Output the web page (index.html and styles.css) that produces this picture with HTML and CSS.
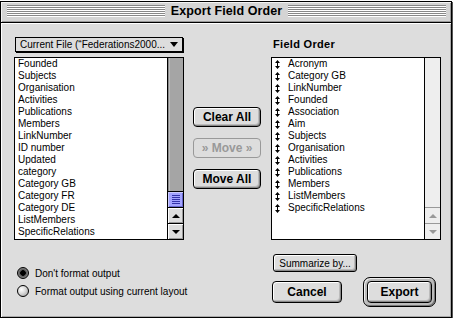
FILE: index.html
```html
<!DOCTYPE html>
<html lang="en">
<head>
  <meta charset="UTF-8">
  <title>Export Field Order</title>
  <link rel="stylesheet" href="styles.css">
</head>
<body>
  <div class="window">
    <!-- Barre de titre -->
    <div class="titlebar">
      <span class="stripes"></span>
      <span class="title">Export Field Order</span>
      <span class="stripes"></span>
    </div>

    <div class="content">
      <div class="top">
        <!-- Champs disponibles -->
        <div class="col">
          <div class="popup">
            <span class="popup-text">Current File (“Federations2000...</span>
            <span class="popup-arrow"></span>
          </div>
          <div class="list">
            <ul class="items">
              <li>Founded</li>
              <li>Subjects</li>
              <li>Organisation</li>
              <li>Activities</li>
              <li>Publications</li>
              <li>Members</li>
              <li>LinkNumber</li>
              <li>ID number</li>
              <li>Updated</li>
              <li>category</li>
              <li>Category GB</li>
              <li>Category FR</li>
              <li>Category DE</li>
              <li>ListMembers</li>
              <li>SpecificRelations</li>
            </ul>
            <div class="scrollbar active">
              <div class="track"><div class="thumb"><span class="grip-lines"></span></div></div>
              <div class="arrow"><span class="tri-up"></span></div>
              <div class="arrow"><span class="tri-down"></span></div>
            </div>
          </div>
        </div>

        <!-- Boutons centraux -->
        <div class="actions">
          <button class="btn">Clear All</button>
          <button class="btn disabled">» Move »</button>
          <button class="btn">Move All</button>
        </div>

        <!-- Ordre des champs -->
        <div class="col right">
          <div class="label">Field Order</div>
          <div class="list">
            <ul class="items order">
              <li><svg class="mover" width="5" height="9" viewBox="0 0 5 9"><path d="M0 3h5L2.5 0zM0 6h5L2.5 9zM2 3h1v3H2z"/></svg>Acronym</li>
              <li><svg class="mover" width="5" height="9" viewBox="0 0 5 9"><path d="M0 3h5L2.5 0zM0 6h5L2.5 9zM2 3h1v3H2z"/></svg>Category GB</li>
              <li><svg class="mover" width="5" height="9" viewBox="0 0 5 9"><path d="M0 3h5L2.5 0zM0 6h5L2.5 9zM2 3h1v3H2z"/></svg>LinkNumber</li>
              <li><svg class="mover" width="5" height="9" viewBox="0 0 5 9"><path d="M0 3h5L2.5 0zM0 6h5L2.5 9zM2 3h1v3H2z"/></svg>Founded</li>
              <li><svg class="mover" width="5" height="9" viewBox="0 0 5 9"><path d="M0 3h5L2.5 0zM0 6h5L2.5 9zM2 3h1v3H2z"/></svg>Association</li>
              <li><svg class="mover" width="5" height="9" viewBox="0 0 5 9"><path d="M0 3h5L2.5 0zM0 6h5L2.5 9zM2 3h1v3H2z"/></svg>Aim</li>
              <li><svg class="mover" width="5" height="9" viewBox="0 0 5 9"><path d="M0 3h5L2.5 0zM0 6h5L2.5 9zM2 3h1v3H2z"/></svg>Subjects</li>
              <li><svg class="mover" width="5" height="9" viewBox="0 0 5 9"><path d="M0 3h5L2.5 0zM0 6h5L2.5 9zM2 3h1v3H2z"/></svg>Organisation</li>
              <li><svg class="mover" width="5" height="9" viewBox="0 0 5 9"><path d="M0 3h5L2.5 0zM0 6h5L2.5 9zM2 3h1v3H2z"/></svg>Activities</li>
              <li><svg class="mover" width="5" height="9" viewBox="0 0 5 9"><path d="M0 3h5L2.5 0zM0 6h5L2.5 9zM2 3h1v3H2z"/></svg>Publications</li>
              <li><svg class="mover" width="5" height="9" viewBox="0 0 5 9"><path d="M0 3h5L2.5 0zM0 6h5L2.5 9zM2 3h1v3H2z"/></svg>Members</li>
              <li><svg class="mover" width="5" height="9" viewBox="0 0 5 9"><path d="M0 3h5L2.5 0zM0 6h5L2.5 9zM2 3h1v3H2z"/></svg>ListMembers</li>
              <li><svg class="mover" width="5" height="9" viewBox="0 0 5 9"><path d="M0 3h5L2.5 0zM0 6h5L2.5 9zM2 3h1v3H2z"/></svg>SpecificRelations</li>
            </ul>
            <div class="scrollbar inactive">
              <div class="track"></div>
              <div class="arrow"><span class="tri-up"></span></div>
              <div class="arrow"><span class="tri-down"></span></div>
            </div>
          </div>
        </div>
      </div>

      <!-- Options et boutons du bas -->
      <div class="bottom">
        <div class="radios">
          <div class="radio-row"><span class="radio on"></span>Don't format output</div>
          <div class="radio-row"><span class="radio"></span>Format output using current layout</div>
        </div>
        <div class="commands">
          <button class="btn small">Summarize by...</button>
          <div class="command-row">
            <button class="btn cancel">Cancel</button>
            <div class="default-ring"><button class="btn">Export</button></div>
          </div>
        </div>
      </div>
    </div>
  </div>
</body>
</html>
```

FILE: styles.css
```css
body {
  margin: 0;
  background: #fff;
  font-family: 'Liberation Sans', Arial, sans-serif;
  color: #000;
}
.window {
  width: 452px;
  height: 317px;
  box-sizing: border-box;
  margin-top: 1px;
  border: 1px solid #000;
  box-shadow: 1px 1px 0 #555;
  background: #ddd;
  display: flex;
  flex-direction: column;
}
.titlebar {
  height: 21px;
  box-sizing: border-box;
  display: flex;
  align-items: flex-start;
  padding: 3px 5px 0 6px;
  background: #d4d4d4;
  border-bottom: 1px solid #000;
  box-shadow: inset 1px 1px #f4f4f4, inset -1px -1px #999;
}
.stripes {
  flex: 1;
  height: 12px;
  background: repeating-linear-gradient(#888 0 1px, #fff 1px 2px);
}
.title {
  font-weight: bold;
  font-size: 12.5px;
  line-height: 13px;
  padding: 0 6px;
  letter-spacing: 0.1px;
}
.content {
  flex: 1;
  padding: 14px 10px 0 13px;
  box-shadow: inset 1px 1px #fff, inset -1px -1px #aaa;
}
.top {
  display: flex;
}
.col {
  width: 170px;
  display: flex;
  flex-direction: column;
}
.col.right {
  margin-left: 10px;
}
.popup {
  margin-left: 1px;
  width: 168px;
  height: 15px;
  box-sizing: border-box;
  border: 1px solid #000;
  box-shadow: 1px 1px 0 #000;
  margin-bottom: 5px;
  display: flex;
  align-items: center;
  justify-content: space-between;
  padding: 0 4px 0 4px;
  font-size: 10px;
  background: #ddd;
}
.popup-arrow {
  width: 0;
  height: 0;
  border-left: 4px solid transparent;
  border-right: 4px solid transparent;
  border-top: 5px solid #000;
}
.label {
  height: 14px;
  line-height: 14px;
  margin-bottom: 6px;
  padding-left: 2px;
  font-size: 11px;
  font-weight: bold;
  letter-spacing: 0.3px;
}
.list {
  height: 183px;
  box-sizing: border-box;
  border: 1px solid #000;
  background: #fff;
  display: flex;
}
.items {
  flex: 1;
  list-style: none;
  margin: 0;
  padding: 0 0 0 3px;
  font-size: 10px;
  line-height: 12px;
}
.items.order li {
  display: flex;
  align-items: center;
}
.mover {
  margin-right: 8px;
}
.scrollbar {
  width: 16px;
  box-sizing: border-box;
  border-left: 1px solid #000;
  display: flex;
  flex-direction: column;
}
.track {
  flex: 1;
  display: flex;
  flex-direction: column;
  justify-content: flex-end;
}
.active .track {
  background: #a5a5a5;
  box-shadow: inset 1px 0 #8a8a8a, inset 2px 0 #bdbdbd;
}
.inactive .track {
  background: #eee;
}
.thumb {
  height: 16px;
  box-sizing: border-box;
  border-top: 1px solid #000;
  background: #a3a3ff;
  box-shadow: inset 1px 1px #ccccff, inset -1px -1px #6666cc;
  display: flex;
  align-items: center;
  justify-content: center;
}
.grip-lines {
  width: 8px;
  height: 9px;
  background: repeating-linear-gradient(#3333aa 0 1px, transparent 1px 2px);
}
.arrow {
  height: 16px;
  box-sizing: border-box;
  display: flex;
  align-items: center;
  justify-content: center;
}
.active .arrow {
  border-top: 1px solid #000;
  background: #ddd;
  box-shadow: inset 1px 1px #fff, inset -1px -1px #999;
}
.inactive .arrow {
  border-top: 1px solid #999;
  background: #eee;
}
.tri-up, .tri-down {
  width: 0;
  height: 0;
  border-left: 4px solid transparent;
  border-right: 4px solid transparent;
}
.tri-up { border-bottom: 4px solid #000; }
.tri-down { border-top: 4px solid #000; }
.inactive .tri-up { border-bottom-color: #999; }
.inactive .tri-down { border-top-color: #999; }
.actions {
  width: 68px;
  margin-left: 9px;
  padding-top: 70px;
  display: flex;
  flex-direction: column;
  gap: 11px;
}
.btn {
  height: 20px;
  box-sizing: border-box;
  padding: 0;
  margin: 0;
  border: 1px solid #000;
  border-radius: 4px;
  background: #ddd;
  box-shadow: inset 1px 1px #fff, inset -1px -1px #888, inset -2px -2px #bbb;
  font-family: 'Liberation Sans', Arial, sans-serif;
  font-weight: bold;
  font-size: 12px;
  color: #000;
  display: flex;
  align-items: center;
  justify-content: center;
}
.btn.disabled {
  border-color: #999;
  color: #999;
  box-shadow: none;
}
.bottom {
  display: grid;
  grid-template-columns: 258px auto;
  margin-top: 14px;
}
.radios {
  padding-top: 10px;
  padding-left: 3px;
}
.radio-row {
  height: 18px;
  display: flex;
  align-items: center;
  gap: 6px;
  font-size: 10px;
}
.radio {
  width: 12px;
  height: 12px;
  box-sizing: border-box;
  border-radius: 50%;
  border: 1px solid #000;
  background: radial-gradient(circle at 35% 35%, #fff 0, #ddd 40%, #999 100%);
}
.radio.on {
  background: radial-gradient(circle, #000 0 2.5px, #555 3px, #888 5px);
}
.btn.small {
  margin-left: 1px;
  width: 84px;
  height: 18px;
  font-weight: normal;
  font-size: 10px;
  border-radius: 3px;
}
.command-row {
  margin-top: 5px;
  display: flex;
  align-items: center;
}
.btn.cancel {
  width: 70px;
  height: 22px;
}
.default-ring {
  margin-left: 21px;
  width: 73px;
  height: 30px;
  box-sizing: border-box;
  padding: 3px;
  border: 1px solid #000;
  border-radius: 7px;
  background: #bbb;
  box-shadow: inset 1px 1px #eee, inset -1px -1px #777;
}
.default-ring .btn {
  width: 100%;
  height: 22px;
}
```
